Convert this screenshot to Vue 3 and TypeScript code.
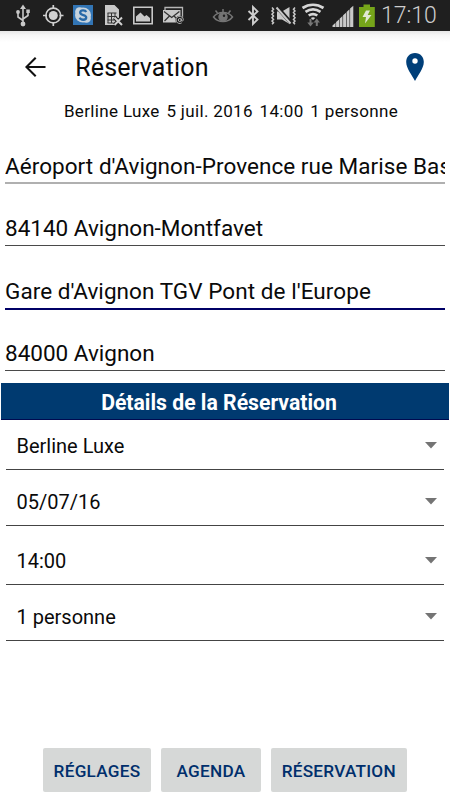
<script setup lang="ts">
import { ref } from 'vue'

interface Field { value: string; kind?: string }

const summary: string[] = ['Berline Luxe', '5 juil. 2016', '14:00', '1 personne']
const fields = ref<Field[]>([
  { value: "Aéroport d'Avignon-Provence rue Marise Bas", kind: 'soft' },
  { value: '84140 Avignon-Montfavet' },
  { value: "Gare d'Avignon TGV Pont de l'Europe", kind: 'focused' },
  { value: '84000 Avignon', kind: 'last' },
])
const details = ref<string[]>(['Berline Luxe', '05/07/16', '14:00', '1 personne'])
</script>

<template>
  <div class="screen">
    <div class="status">
      <svg width="38" height="31" viewBox="0 0 38 31" fill="none" stroke="#c9c9c9" stroke-width="1.6">
        <path d="M23 8v15M23 20.500l-5-3.500v-4M23 19l5-3.500v-4" />
        <path d="M23 4.500l3 4.500h-6z" fill="#c9c9c9" stroke="none" />
        <circle cx="23" cy="24" r="2.400" fill="#c9c9c9" stroke="none" />
        <circle cx="18" cy="12" r="1.900" fill="#c9c9c9" stroke="none" />
        <path d="M26.300 9.500h3.500v3.500h-3.500z" fill="#c9c9c9" stroke="none" />
      </svg>
      <svg width="30" height="31" viewBox="38 0 30 31" fill="none" stroke="#d0d0d0" stroke-width="1.700">
        <circle cx="53.300" cy="15.500" r="7.400" />
        <circle cx="53.300" cy="15.500" r="4.500" fill="#d0d0d0" stroke="none" />
        <path d="M53.300 5v4M53.300 22v4M43 15.500h4M59.500 15.500h4" />
      </svg>
      <svg width="31" height="31" viewBox="68 0 31 31">
        <path d="M73 5h20v20H73z" fill="#3275b5" />
        <ellipse cx="83" cy="15" rx="8" ry="7.500" fill="#c6d3de" />
        <circle cx="79.500" cy="11.500" r="4.300" fill="#c6d3de" />
        <circle cx="86.500" cy="18.500" r="4.300" fill="#c6d3de" />
        <path d="M86.200 12c-1-2.300-6-2.200-6 .6 0 3.300 6 1.700 6 4.900 0 3-5.600 2.900-6.500.2" fill="none" stroke="#2869a8" stroke-width="2.300" />
      </svg>
      <svg width="30" height="31" viewBox="99 0 30 31">
        <path d="M105 5h9.500l4.500 4.500V18l-3 1v6h-11z" fill="#c9c9c9" />
        <path d="M107.500 13h9M107.500 16.500h9M107.500 20h7M107.500 23h6M108 13v10M111.500 13v10M115 13v7" stroke="#333" stroke-width="1" />
        <path d="M114.500 17.500l7.500 7.500M122 17.500l-7.500 7.500" stroke="#1f1f1f" stroke-width="4" />
        <path d="M114.500 17.500l7.500 7.500M122 17.500l-7.500 7.500" stroke="#d0d0d0" stroke-width="2" />
      </svg>
      <svg width="29" height="31" viewBox="129 0 29 31">
        <path d="M133.800 7.300h18.400v16.400h-18.400z" fill="none" stroke="#c9c9c9" stroke-width="1.600" />
        <path d="M136 21.500v-5l4.500-4 4 4 2-1.500 3.500 3v3.500z" fill="#c9c9c9" />
      </svg>
      <svg width="50" height="31" viewBox="158 0 50 31">
        <path d="M165 10V7.500h17.500V18" fill="none" stroke="#b5b5b5" stroke-width="1.300" />
        <path d="M163 10h17.500v12.500H163z" fill="#c9c9c9" />
        <path d="M164 11.500l7.700 6 7.700-6M164.500 21l5-5M179 21l-5-5" fill="none" stroke="#333" stroke-width="1.300" />
        <circle cx="179.800" cy="20" r="4.300" fill="#1f1f1f" />
        <circle cx="179.800" cy="20" r="1.500" fill="none" stroke="#b5b5b5" />
        <path d="M181.300 18.500v2.300c1 1 2-.2 2-1.200a3.600 3.600 0 1 0-1.600 3.300" fill="none" stroke="#b5b5b5" />
      </svg>
      <svg width="33" height="31" viewBox="208 0 33 31" fill="none" stroke="#747474" stroke-width="1.500">
        <path d="M213.500 17c4.500-6 14.500-6 19 0-4.500 6-14.500 6-19 0z" />
        <circle cx="223" cy="17" r="4" fill="#747474" />
        <circle cx="224" cy="15.800" r="1.200" fill="#1f1f1f" stroke="none" />
        <path d="M223 12v-3M217.500 13l-2-2.500M228.500 13l2-2.500" />
      </svg>
      <svg width="26" height="31" viewBox="241 0 26 31" fill="none" stroke="#cdcdcd" stroke-width="1.900">
        <path d="M248.500 11l9 8.500-4.500 4.500V7l4.500 4.500-9 8.500" />
      </svg>
      <svg width="34" height="31" viewBox="267 0 34 31" fill="none" stroke="#c9c9c9" stroke-width="1.500">
        <path d="M272 7.500l1.500 1.700-1.500 1.700 1.500 1.700-1.500 1.700 1.500 1.700-1.500 1.700 1.500 1.700-1.500 1.700 1.500 1.700-1.500 1.500M295 7.500l-1.500 1.700 1.500 1.700-1.500 1.700 1.500 1.700-1.500 1.700 1.500 1.700-1.500 1.700 1.500 1.700-1.500 1.700 1.500 1.500" />
        <path d="M277 11.500h5l7.500-4.500v17l-7.500-4.500h-5z" fill="#c9c9c9" stroke="none" />
        <path d="M277 7l14 16" stroke="#1f1f1f" stroke-width="4" />
        <path d="M276.500 7.500l14 16" stroke-width="1.900" />
      </svg>
      <svg width="29" height="31" viewBox="301 0 29 31" fill="none" stroke="#d6d6d6" stroke-width="2.700">
        <path d="M302.500 8c6.500-4.300 14.500-4.300 21 0M305.500 11.900c4.800-3.300 10.200-3.300 15 0M308.700 15.500c3-2 5.600-2 8.600 0" />
        <path d="M310.700 18c1.700-1 3-1 4.600 0l-2.300 2z" fill="#d6d6d6" stroke="none" />
        <path d="M310.500 19v4M316.800 26v-4" stroke="#777" stroke-width="2" />
        <path d="M307.300 22.500h6.400l-3.200 4zM313.700 22.500h6.200l-3.100-4z" fill="#777" stroke="none" />
      </svg>
      <svg width="26" height="31" viewBox="330 0 26 31" fill="#c9c9c9">
        <path d="M332.500 27v-1.500l3-2.800V27zM336.100 27v-5l2.900-2.600V27zM339.600 27v-8.300l2.900-2.600V27zM343.100 27V15.300l2.900-2.600V27zM346.600 27V12l2.900-2.700V27zM350.100 27V8.500l3.200-2.800V27z" />
      </svg>
      <svg width="25" height="31" viewBox="356 0 25 31">
        <path d="M359 7h4.500V4.500h6.500V7h4.800v20H359z" fill="#76a51a" />
        <path d="M366 10.500l-3.500 6.500h3.500l-1 6.500 6.500-8.500h-3.800l2.300-4.500z" fill="#e2e8d4" />
      </svg>
      <span class="clock">17:10</span>
    </div>

    <header class="appbar">
      <svg class="back" width="22" height="22" viewBox="0 0 22 22" fill="none" stroke="#111" stroke-width="2.1">
        <path d="M20.500 11H1.500M10.700 1.700L1.400 11l9.300 9.300" />
      </svg>
      <h1 class="title">Réservation</h1>
      <svg class="pin" width="18" height="28" viewBox="0 0 18 28">
        <path d="M9 0C3.500 0 .2 4 .2 9 .2 15.500 6 22 9 28 12 22 17.800 15.500 17.800 9 17.800 4 14.500 0 9 0z" fill="#003f79" />
        <circle cx="9" cy="8" r="2.700" fill="#fff" />
      </svg>
    </header>

    <p class="summary"><span v-for="s in summary" :key="s">{{ s }}</span></p>

    <div class="fields">
      <div v-for="f in fields" :key="f.value" class="field" :class="f.kind">{{ f.value }}</div>
    </div>

    <h2 class="banner">Détails de la Réservation</h2>

    <div class="details">
      <div v-for="d in details" :key="d" class="select">
        <span>{{ d }}</span>
        <svg width="12" height="7" viewBox="0 0 12 7"><path d="M0 0h12L6 6.500z" fill="#747474" /></svg>
      </div>
    </div>

    <nav class="actions">
      <button class="b1" type="button">RÉGLAGES</button>
      <button class="b2" type="button">AGENDA</button>
      <button class="b3" type="button">RÉSERVATION</button>
    </nav>
  </div>
</template>

<style>
body { background: #fff; }
</style>

<style scoped>
.screen {
  width: 450px;
  height: 800px;
  overflow: hidden;
  display: flex;
  flex-direction: column;
  background: #fff;
  color: #0a0a0a;
  font-family: Roboto, "Liberation Sans", sans-serif;
}
.status { display: flex; flex: none; height: 31px; background: #1f1f1f; }
.status svg { flex: none; }
.clock { font-size: 23px; line-height: 31px; color: #cdcdcd; white-space: nowrap; font-weight: 300; }
.appbar {
  flex: none;
  box-sizing: border-box;
  height: 69px;
  padding: 3px 26px 0 24.7px;
  display: flex;
  align-items: center;
  background: linear-gradient(#e6e6e6, #f5f5f5 4px, #fff 11px);
}
.title { margin: 0 auto 0 28.500px; font-size: 25px; font-weight: 400; letter-spacing: 0.2px; }
.summary {
  flex: none;
  margin: 0;
  height: 23px;
  line-height: 23px;
  display: flex;
  justify-content: center;
  gap: 6.7px;
  padding-left: 12px;
  font-size: 17px;
  letter-spacing: 0.34px;
  white-space: nowrap;
}
.fields { flex: none; padding: 0 5px; margin-top: -2px; }
.field {
  box-sizing: border-box;
  height: 62.5px;
  padding-top: 27.500px;
  line-height: 34px;
  font-size: 22.5px;
  white-space: nowrap;
  overflow: hidden;
  border-bottom: 1px solid #4a4a4a;
}
.field.soft { border-bottom: 2px solid #b0b0b0; letter-spacing: 0.05px; }
.field.focused { height: 64px; border-bottom: 2px solid #000066; letter-spacing: 0.06px; }
.field.last { height: 61px; padding-top: 25.5px; }
.banner {
  flex: none;
  box-sizing: border-box;
  height: 37px;
  margin: 12px 1px 0 1px;
  background: #003a70;
  border-bottom: 1px solid #000a50;
  color: #fff;
  text-align: center;
  padding-right: 12px;
  font-size: 21.2px;
  font-weight: 700;
  line-height: 39px;
}
.details { flex: none; padding: 0 6px; }
.select {
  box-sizing: border-box;
  height: 56px;
  padding: 0 7px 6px 10.5px;
  display: flex;
  justify-content: space-between;
  align-items: flex-end;
  border-bottom: 1px solid #444;
  font-size: 20px;
  line-height: 34px;
}
.select svg { margin-bottom: 14px; }
.select:first-child { height: 50px; }
.select:nth-child(3) { height: 59px; }
.actions { display: flex; gap: 10px; margin: auto 0 8.5px 43px; }
.actions button {
  height: 44px;
  padding: 2px 0 0;
  border: 0;
  border-radius: 2px;
  background: #d6d8d7;
  color: #002f6c;
  font-family: inherit;
  font-size: 17.2px;
  font-weight: 500;
  letter-spacing: 0.25px;
}
.b1 { width: 108px; }
.b2 { width: 100px; }
.b3 { width: 135.5px; }
</style>
